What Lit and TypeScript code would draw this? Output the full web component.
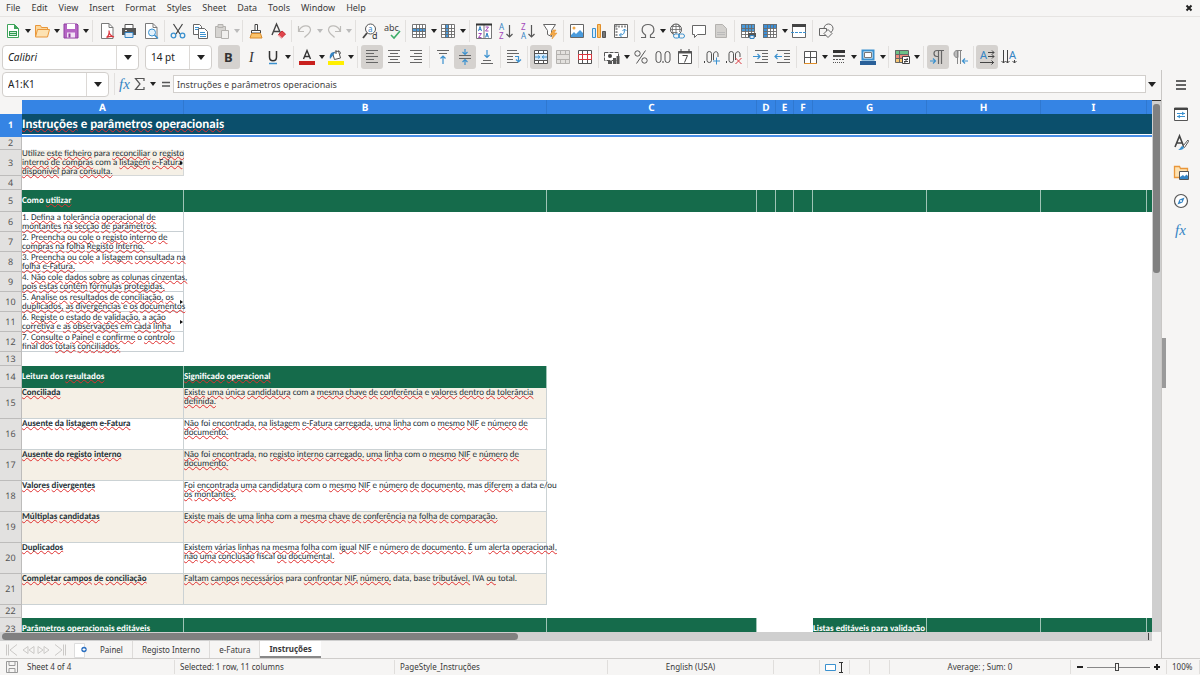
import { LitElement, html, svg, css, nothing, TemplateResult } from "lit";
import { customElement, property } from "lit/decorators.js";
import { classMap } from "lit/directives/class-map.js";

const page = svg`<path d="M2.500 .5h7.500l4 4v11h-11.500z" fill="#fff" stroke="#7a7a7a"/><path d="M10 .5v4h4" fill="none" stroke="#7a7a7a"/>`;
const lines = (d: string, color = "#666") => svg`<path d=${d} fill="none" stroke=${color}/>`;
const gridLines = svg`<path d="M1.500 1.500h13v13h-13zM1.500 5.500h13M1.500 8.500h13M1.500 11.500h13M5.500 1.500v13M8.500 1.500v13M11.500 1.500v13" fill="none" stroke="#6a6a6a" stroke-width=".9"/>`;
const letter = (x: number, y: number, size: number, fill: string, s: string) =>
  svg`<text x=${x} y=${y} font-size=${size} fill=${fill} font-family="Noto Sans">${s}</text>`;

const ICONS: Record<string, TemplateResult> = {
  new: svg`<path d="M2.500 1.500h7l4 4v9h-11z" fill="#fff" stroke="#3fa45b"/><path d="M9 1v5h5z" fill="#3fa45b"/><path d="M4 8h8v5h-8z" fill="#2f9a50"/><path d="M5 9.500h6M5 11.500h6" stroke="#cfeed8"/>`,
  open: svg`<path d="M1.500 13.500v-11h5l1 2h6v3" fill="#fcd79b" stroke="#e9973a"/><path d="M3.500 6.500h12l-2 7.500h-12z" fill="#fde2b3" stroke="#e9973a"/>`,
  save: svg`<path d="M1 1h13l1 1v13h-14z" fill="#b565c4" stroke="#8f3fa0"/><path d="M4 1h8v5h-8z" fill="#fff"/><path d="M4 9.500h8v5h-8z" fill="#f3e3f6"/><path d="M5.500 10.500h2v4h-2z" fill="#8f3fa0"/>`,
  pdf: svg`${page}<path d="M7.500 14.500c2.500-2 3-4 2.500-7c0 3 2 5.500 5 6.500c-2-1-5-.5-7.500 .5" fill="none" stroke="#d9363e" stroke-width="1.200"/>`,
  print: svg`<path d="M4 1.500h8v4h-8z" fill="#fff" stroke="#555"/><path d="M1 5h14v7h-14z" fill="#555"/><path d="M4 9.500h8v5h-8z" fill="#dceaf7" stroke="#3584c4"/><path d="M4 7.500h2" stroke="#eee"/>`,
  preview: svg`${page}<circle cx="9" cy="9.500" r="3.500" fill="#e3f1fb" stroke="#3b91cf"/><path d="M11.500 12l3.500 3.500" stroke="#3b91cf" stroke-width="1.500"/>`,
  cut: svg`<path d="M3.500 1l6.500 10M12.500 1l-6.500 10" stroke="#444" fill="none" stroke-width="1.200"/><circle cx="3.500" cy="12.500" r="2.300" fill="none" stroke="#3b91cf" stroke-width="1.300"/><circle cx="12.500" cy="12.500" r="2.300" fill="none" stroke="#3b91cf" stroke-width="1.300"/>`,
  copy: svg`<path d="M1.500 1.500h6l2 2v8h-8z" fill="#fff" stroke="#666"/><path d="M3 4.500h4M3 6.500h4" stroke="#3b91cf"/><path d="M6.500 5.500h6l3 3v7h-9z" fill="#fff" stroke="#666"/><path d="M8 9.500h5M8 11.500h6M8 13.500h6" stroke="#3b91cf"/>`,
  paste: svg`<path d="M1.500 3.500h10v11h-10z" fill="#d6d4d1" stroke="#b4b2af"/><path d="M4 1.500h5v3h-5z" fill="#d6d4d1" stroke="#b4b2af"/><path d="M7.500 7.500h7v8h-7z" fill="#f1f0ee" stroke="#b4b2af"/>`,
  brush: svg`<path d="M7 1.500h2.500v6h-2.500z" fill="#fff" stroke="#444"/><path d="M3.500 7.500h9v2.500h-9z" fill="#fff" stroke="#444"/><path d="M3.500 10.500h9l1.500 4.500h-12z" fill="#fbc36b" stroke="#d98a2b"/>`,
  clear: svg`<path d="M2 12l4.500-11l4 9M3.500 8.500h6" fill="none" stroke="#444" stroke-width="1.400"/><path d="M8 12l4-4l3.500 3l-4 4z" fill="#e0454c" stroke="#c62b33"/><path d="M8 12l3.500 3" stroke="#f5b3b6" stroke-width="1.500"/>`,
  undo: svg`<path d="M1.500 3v5.500h5.500M2 8c2-6 10.500-7 11.500-1.500c.3 3-3 5-6 8" fill="none" stroke="#bebcb9" stroke-width="1.200"/>`,
  redo: svg`<path d="M14.500 3v5.500h-5.500M14 8c-2-6-10.500-7-11.500-1.500c-.3 3 3 5 6 8" fill="none" stroke="#bebcb9" stroke-width="1.200"/>`,
  find: svg`<circle cx="8.500" cy="6" r="5" fill="#fff" stroke="#555"/><path d="M5 10l-4 5" stroke="#444" stroke-width="1.800"/>${letter(6, 9, 8, "#3584c4", "a")}${letter(10, 16, 9, "#333", "d")}`,
  spell: svg`${letter(0, 8, 9, "#444", "abc")}<path d="M7 12l3 3l6-7" fill="none" stroke="#3fae6a" stroke-width="1.600"/>`,
  row: svg`<path d="M1 1h14v14h-14z" fill="#fff"/><path d="M1 5h14v4h-14z" fill="#4a9bdc"/>${gridLines}`,
  col: svg`<path d="M1 1h14v14h-14z" fill="#fff"/><path d="M5 1h4v14h-4z" fill="#4a9bdc"/>${gridLines}`,
  sort: svg`<path d="M.5 1.500h15v14h-15zM8 2v13" fill="#fff" stroke="#777"/><path d="M0 1.500h16" stroke="#333" stroke-width="2"/><path d="M2.500 8l1.500-4.500l1.500 4.500M3 6.500h2M9.500 14.500l1.500-4.500l1.500 4.500M10 13h2" fill="none" stroke="#3584c4"/><path d="M2.500 10.500h3l-3 4h3M9.500 4h3l-3 4h3" fill="none" stroke="#a347ba"/>`,
  asc: svg`${letter(1, 7, 8, "#3584c4", "A")}${letter(1, 16, 8, "#a347ba", "Z")}<path d="M11.500 2v12M8.500 11l3 3l3-3" fill="none" stroke="#555" stroke-width="1.200"/>`,
  desc: svg`${letter(1, 7, 8, "#a347ba", "Z")}${letter(1, 16, 8, "#3584c4", "A")}<path d="M11.500 2v12M8.500 11l3 3l3-3" fill="none" stroke="#555" stroke-width="1.200"/>`,
  filter: svg`<path d="M1.500 1.500h12l-4 6v6l-4-2v-4z" fill="#fff" stroke="#666"/><path d="M11 7l-3 5h3l-1 4l5-6h-3l2-3z" fill="#f3a949" stroke="#e08e2a" stroke-width=".5"/>`,
  image: svg`<path d="M1.500 1.500h13v13h-13z" fill="#fff" stroke="#666"/><circle cx="5" cy="5" r="1.500" fill="#f3a949"/><path d="M2 14v-2l3-3l2 2l4-4l3 3v4z" fill="#4a9bdc"/>`,
  chart: svg`<path d="M1.500 5.500h3v9h-3z" fill="#d9ecfa" stroke="#3b91cf"/><path d="M6.500 1.500h3v13h-3z" fill="#fbc36b" stroke="#e08e2a"/><path d="M11.500 8.500h3v6h-3z" fill="#777" stroke="#555"/>`,
  pivot: svg`<path d="M1.500 1.500h13v13h-13z" fill="#fff" stroke="#666"/><path d="M2 3.500h12M3.500 2v12" stroke="#999" stroke-width="2" stroke-dasharray="2 1"/><path d="M6.500 12c4 0 5-1 5-6M8.500 10l-2 2l2 2M9.500 8l2-2l2 2" fill="none" stroke="#3b91cf"/>`,
  omega: svg`<path d="M1 14.500h4.500v-2.500c-5-3-4.500-10.500 2.500-10.500s7.500 7.500 2.500 10.500v2.500h4.500" fill="none" stroke="#666" stroke-width="1.200"/>`,
  link: svg`<circle cx="7" cy="6.500" r="5.500" fill="#fff" stroke="#555"/><path d="M1.500 6.500h11M7 1v11M2.500 3.500h9M2.500 9.500h6M4.500 2c-1.500 3-1.500 6 0 9M9.500 2c1.500 3 1.500 5 1 7" fill="none" stroke="#666" stroke-width=".8"/><rect x="4.500" y="11" width="6" height="4" rx="2" fill="#f6f5f4" stroke="#3b91cf"/><rect x="9.500" y="11" width="6" height="4" rx="2" fill="none" stroke="#3b91cf"/>`,
  comment: svg`<path d="M1.500 2.500h13v9h-8l-3 3v-3h-2z" fill="#fff" stroke="#666"/>`,
  header: svg`<path d="M2.500 1.500h7l4 4v9h-11z" fill="#d3d1ce" stroke="#b4b2af"/><path d="M4 9.500h8M4 11.500h8" stroke="#bbb"/>`,
  printarea: svg`<path d="M1 1h14v14h-14z" fill="#fff"/><path d="M1 1h14v7h-14z" fill="#4a9bdc"/>${gridLines}<path d="M8 10h8v4h-8z" fill="#555"/><path d="M10 12.500h4v3h-4z" fill="#dceaf7" stroke="#3584c4"/>`,
  freeze: svg`<path d="M1 1h14v14h-14z" fill="#fff"/><path d="M1 1h14v4h-14zM1 1h4v14h-4z" fill="#3b8fd8"/>${gridLines}`,
  split: svg`<path d="M1.500 3.500h13v11h-13z" fill="#fff" stroke="#666"/><path d="M1 2.500h14" stroke="#444" stroke-width="3"/><path d="M0 9.500h16" stroke="#3b91cf" stroke-dasharray="3 1"/>`,
  shapes: svg`<circle cx="10.500" cy="5.500" r="4.500" fill="#f6f5f4" stroke="#666"/><path d="M1.500 5.500h7v7h-7z" fill="#f6f5f4" stroke="#666"/><path d="M10 6.500l4 4l-4 4l-4-4z" fill="#f6f5f4" stroke="#666"/>`,
  bold: svg`<text x="3" y="13" font-size="13" font-weight="700" fill="#333" font-family="Noto Sans">B</text>`,
  italic: svg`<text x="6" y="13" font-size="14" font-style="italic" fill="#333" font-family="Liberation Serif">I</text>`,
  underline: svg`<path d="M4.500 2v6c0 5 7 5 7 0v-6" fill="none" stroke="#333" stroke-width="1.500"/><path d="M4 14.500h8" stroke="#3b91cf" stroke-width="1.500"/>`,
  fontcolor: svg`<path d="M4.500 10l3.500-8.500l3.500 8.500M5.500 7.500h5" fill="none" stroke="#333" stroke-width="1.400"/><path d="M0 12h16v4h-16z" fill="#c9211e"/>`,
  highlight: svg`<path d="M4.500 4l6-2l2 7l-6 1.500z" fill="#fff" stroke="#555"/><path d="M2 10c-1-4 1-8 5-6.500l-2 3z" fill="#3584c4"/><path d="M8 1v4M10 2c3 0 3 3 1 4" fill="none" stroke="#555"/><path d="M0 12h16v4h-16z" fill="#ffef00"/>`,
  left: lines("M2 1.500h12M2 4.500h8M2 7.500h12M2 10.500h8M2 13.500h12"),
  center: lines("M2 1.500h12M4 4.500h8M2 7.500h12M4 10.500h8M2 13.500h12"),
  right: lines("M2 1.500h12M6 4.500h8M2 7.500h12M6 10.500h8M2 13.500h12"),
  top: svg`${lines("M2 1.500h12M4 4.500h8")}<path d="M8 15v-8M5.500 9.500l2.500-2.500l2.500 2.500" fill="none" stroke="#3b91cf" stroke-width="1.200"/>`,
  middle: svg`${lines("M2 6.500h12M2 9.500h12")}<path d="M8 0v5M5.500 3l2.500 2.500l2.500-2.500M8 16v-5M5.500 13l2.500-2.500l2.500 2.500" fill="none" stroke="#3b91cf" stroke-width="1.200"/>`,
  bottom: svg`${lines("M2 14.500h12M4 11.500h8")}<path d="M8 1v7M5.500 6l2.500 2.500l2.500-2.500" fill="none" stroke="#3b91cf" stroke-width="1.200"/>`,
  wrap: svg`${lines("M1 1.500h10M1 4.500h12M1 7.500h6M1 10.500h6M1 13.500h11")}<path d="M9 7.500h3.500v5M10 10.500l2.500 2.500l2.500-2.500" fill="none" stroke="#3b91cf" stroke-width="1.200"/>`,
  merge: svg`<path d="M1.500 1.500h13v13h-13zM1.500 4.500h13M1.500 11.500h13M5.500 1.500v3M10.500 1.500v3M5.500 11.500v3M10.500 11.500v3" fill="#fff" stroke="#555"/><path d="M2 5h12v6h-12z" fill="#d6eafa"/><path d="M2 8h4M10 8h4M5 6.500l2 1.500l-2 1.500M11 6.500l-2 1.500l2 1.500" fill="none" stroke="#3b91cf"/>`,
  mergeoff: svg`<path d="M1.500 1.500h13v13h-13zM1.500 5.500h13M1.500 10.500h13M5.500 1.500v4M10.500 1.500v4M5.500 10.500v4M10.500 10.500v4" fill="#e3e1de" stroke="#b4b2af"/>`,
  unmerge: svg`<path d="M1.500 1.500h13v13h-13zM5.500 1.500v13M10.500 1.500v13" fill="#fff" stroke="#555"/><path d="M1.500 5.500h13v5h-13zM5.500 5.500v5M10.500 5.500v5" fill="#fff" stroke="#d9363e"/>`,
  currency: svg`<path d="M.5 3.500h14v8h-14z" fill="#fff" stroke="#555" stroke-dasharray="4 1"/><circle cx="6" cy="7" r="2" fill="#444"/><path d="M9 9h3v6h-3zM12.500 7h3v8h-3zM4 12h4v3h-4z" fill="#555"/>`,
  percent: svg`<circle cx="4.500" cy="4.500" r="2.700" fill="none" stroke="#555"/><circle cx="11.500" cy="11.500" r="2.700" fill="none" stroke="#555"/><path d="M12.500 1.500l-9 13" stroke="#555"/>`,
  number: svg`<rect x="1" y="2.500" width="5" height="11" rx="2.500" fill="none" stroke="#555"/><rect x="10" y="2.500" width="5" height="11" rx="2.500" fill="none" stroke="#555"/><path d="M8 12v2" stroke="#444"/>`,
  date: svg`<path d="M1.500 2.500h13v12h-13z" fill="#fff" stroke="#555"/><path d="M1 3.500h14" stroke="#555" stroke-width="2"/><path d="M4 0v3M12 0v3" stroke="#444"/><path d="M5.500 6.500h5l-3 7" fill="none" stroke="#444"/>`,
  addDec: svg`<path d="M.5 12v2" stroke="#444"/><rect x="3" y="2.500" width="4.500" height="11" rx="2.200" fill="none" stroke="#555"/><path d="M14 8v-3c0-3-4-3-4.500 0v6" fill="none" stroke="#555"/><path d="M12.500 8.500v7M9 12h7" stroke="#3b91cf"/>`,
  delDec: svg`<path d="M.5 12v2" stroke="#444"/><rect x="3" y="2.500" width="4.500" height="11" rx="2.200" fill="none" stroke="#555"/><path d="M14 8v-3c0-3-4-3-4.500 0v6" fill="none" stroke="#555"/><path d="M9.500 9l6 6M15.500 9l-6 6" stroke="#d9363e"/>`,
  indent: svg`${lines("M2 1.500h13M9 4.500h6M9 7.500h6M9 10.500h6M2 13.500h13")}<path d="M0 7.500h7M4.500 5l2.500 2.500l-2.500 2.500" fill="none" stroke="#3b91cf" stroke-width="1.200"/>`,
  outdent: svg`${lines("M2 1.500h13M9 4.500h6M9 7.500h6M9 10.500h6M2 13.500h13")}<path d="M7 7.500h-7M2.500 5l-2.500 2.500l2.500 2.500" fill="none" stroke="#3b91cf" stroke-width="1.200"/>`,
  borders: svg`<path d="M2.500 2.500h12v12h-12zM8.500 2.500v12M2.500 8.500h12" fill="#fff" stroke="#555"/><path d="M2 14.500h13" stroke="#e08e2a"/>`,
  linestyle: svg`<path d="M2 2.500h12" stroke="#333" stroke-width="3"/><path d="M2 7h12" stroke="#555" stroke-width="2"/><path d="M2 10.500h12" stroke="#555" stroke-dasharray="2 1"/><path d="M2 13.500h12" stroke="#555" stroke-dasharray="1 1"/>`,
  bordercolor: svg`<path d="M2.500 1.500h11v9h-11z" fill="#fff" stroke="#3b91cf" stroke-width="2"/><path d="M4.500 3.500h7v5h-7z" fill="none" stroke="#777"/><path d="M0 12h16v4h-16z" fill="#2a6099"/>`,
  cond: svg`<path d="M1 1h13v4h-13z" fill="#6cc287"/><path d="M1 5h13v4h-13z" fill="#ee8a7e"/><path d="M1 9h8v5h-8z" fill="#f6c774"/><path d="M1.500 1.500h13v12h-13zM1.500 5.500h13M1.500 9.500h13M5.500 1.500v12" fill="none" stroke="#666"/><path d="M8.500 7.500h7v7h-7z" fill="#fff" stroke="#444"/><path d="M10 10.500h4M10 12.500h4M13.500 9l-3 5" stroke="#444"/>`,
  ltr: svg`<path d="M14 1.500h-7c-4 0-4 6 0 6h1M8.500 2v13M11.500 2v13" fill="none" stroke="#666" stroke-width="1.200"/><path d="M0 12h5M3 9.500l2.500 2.500l-2.500 2.500" fill="none" stroke="#3b91cf" stroke-width="1.200"/>`,
  rtl: svg`<path d="M10 1.500h-5c-4 0-4 7 0 7h1v-7M5.500 2v13M8.500 2v13" fill="#bbb" stroke="#888"/><path d="M16 12h-5M13 9.500l-2.500 2.500l2.500 2.500" fill="none" stroke="#3b91cf" stroke-width="1.200"/>`,
  textlr: svg`${letter(1, 10, 11, "#3584c4", "A")}<path d="M9 3.500h6M13 1.500l2 2l-2 2M9 7.500h6M13 5.500l2 2l-2 2M1 13.500h14M12.500 11.500l2 2l-2 2" fill="none" stroke="#444"/>`,
  texttb: svg`${letter(8, 10, 11, "#3584c4", "A")}<path d="M2.500 1v13M.5 12l2 2l2-2M6.500 1v13M4.500 12l2 2l2-2M13.500 11v3M11.500 12l2 2l2-2" fill="none" stroke="#444"/>`,
  fx: svg`<text x="2" y="13" font-size="15" font-style="italic" fill="#3584c4" font-family="Liberation Serif">fx</text>`,
  sigma: svg`<path d="M12 5v-2.500h-8.500l4.500 5.500l-4.500 5.500h8.500v-2.500" fill="none" stroke="#555" stroke-width="1.200"/>`,
  equal: svg`<path d="M4 6.500h8M4 10h8" stroke="#555" stroke-width="1.600"/>`,
  menu: svg`<path d="M3 4h10M3 8h10M3 12h10" stroke="#333" stroke-width="1.600"/>`,
  props: svg`<path d="M1.500 2h13v12.500h-13z" fill="#fff" stroke="#555"/><path d="M1 3h14" stroke="#444" stroke-width="2"/><path d="M4 7.500h8M4 10.500h8" stroke="#3b91cf"/><path d="M9 6l2 1.500l-2 1.500M7 9l-2 1.500l2 1.500" fill="none" stroke="#3b91cf"/>`,
  styles: svg`<path d="M2 12l4.500-11l4 10M3.500 8h6" fill="none" stroke="#444" stroke-width="1.600"/><path d="M15 5l-5 6l1.500 1.500l4-6z" fill="#fff" stroke="#555"/><path d="M5 14.500c2 1 6 0 6-2l-1.500-1.500c-2 0-1.500 3-4.500 3.500z" fill="#3b91cf"/>`,
  gallery: svg`<path d="M1.500 13.500v-11h5l1 2h7v9z" fill="#fde2b3" stroke="#e9973a" stroke-width="1.300"/><path d="M6.500 7.500h9v8h-9z" fill="#fff" stroke="#555"/><path d="M7 15v-2l3-2l1.500 1.500l2-2l1.500 1.500v3z" fill="#3584c4"/>`,
  nav: svg`<circle cx="8" cy="8" r="6.500" fill="#fff" stroke="#555" stroke-width="1.200"/><path d="M11.500 4.500l-2 5l-5 2l2-5z" fill="#3584c4"/><circle cx="8" cy="8" r="1" fill="#fff"/>`,
  first: svg`<path d="M2.500 2.500v11M4.500 2.500v11M13 2.500l-7 5.500l7 5.500" fill="none" stroke="#cbc9c7"/>`,
  prev: svg`<path d="M14 4.500l-5 3.500l5 3.500zM8 4.500l-5 3.500l5 3.500z" fill="none" stroke="#cbc9c7"/>`,
  next: svg`<path d="M2 4.500l5 3.500l-5 3.500zM8 4.500l5 3.500l-5 3.500z" fill="none" stroke="#cbc9c7"/>`,
  last: svg`<path d="M13.500 2.500v11M11.500 2.500v11M3 2.500l7 5.500l-7 5.500" fill="none" stroke="#cbc9c7"/>`,
  addsheet: svg`<path d="M-.5 1.500h10v14h-10z" fill="#fff" stroke="#ddd"/><circle cx="9" cy="7.500" r="2.700" fill="#2a6fc0"/><path d="M7.500 7.500h3M9 6v3" stroke="#fff"/>`,
  disk: svg`<path d="M2.500 2.500h11v11h-11zM5 2.500v4h6v-4M5 13.500v-4h6v4" fill="none" stroke="#999"/>`,
  close: svg`<path d="M5.500 5.500l5 5M10.500 5.500l-5 5" stroke="#222" stroke-width="2"/>`,
};

const icon = (name: string) =>
  html`<svg viewBox="0 0 16 16" width="16" height="16" aria-hidden="true">${ICONS[name]}</svg>`;

const shared = css`
  * { box-sizing: border-box; }
  button {
    font: inherit;
    color: inherit;
    background: none;
    border: 0;
    padding: 0;
    margin: 0;
    display: flex;
    align-items: center;
    justify-content: center;
    flex: none;
  }
  svg { display: block; flex: none; overflow: visible; }
  .drop::before {
    content: "";
    border: 3px solid transparent;
    border-top: 4px solid #222;
    border-bottom: 0;
  }
  .drop.dim::before { border-top-color: #bbb; }
`;

/* Toolbar tokens: "name" icon, "name*" pressed, "name+" with drop arrow, "name-" with dimmed arrow, "|" and "||" separators. */
const STANDARD = "new+ open+ save+ || pdf print preview | cut copy paste- | brush clear | undo- redo- || find spell | row+ col+ || sort asc desc filter | image chart pivot | omega+ link comment header | printarea freeze+ split | shapes";
const FORMATTING = "bold* italic underline+ | fontcolor+ highlight+ || left* center right | top middle* bottom | wrap | merge* mergeoff unmerge | currency+ percent number date | addDec delDec | indent outdent | borders+ linestyle+ bordercolor+ | cond+ || ltr* rtl | textlr* texttb";

@customElement("tool-strip")
class ToolStrip extends LitElement {
  @property() items = "";
  static styles = [
    shared,
    css`
      :host { display: flex; align-items: center; }
      .tool { width: 22px; height: 24px; border-radius: 3px; }
      .on { background: #d5d2cf; }
      .drop { width: 7px; height: 24px; }
      .sep { width: 5px; height: 22px; flex: none; display: flex; justify-content: center; }
      .sep::before { content: ""; width: 1px; background: #e2e0de; }
      .wide { width: 7px; }
    `,
  ];
  render() {
    return this.items.split(" ").map((t) => {
      if (t[0] === "|") return html`<span class=${classMap({ sep: true, wide: t === "||" })}></span>`;
      const name = t.replace(/[*+-]/, "");
      const flag = t.slice(name.length);
      return html`<button class=${classMap({ tool: true, on: flag === "*" })} aria-label=${name}>${icon(name)}</button>
        ${flag === "+" || flag === "-"
          ? html`<button class=${classMap({ drop: true, dim: flag === "-" })} aria-label="${name} options"></button>`
          : nothing}`;
    });
  }
}

const COLS: [string, number][] = [
  ["A", 162], ["B", 363], ["C", 210], ["D", 19], ["E", 18], ["F", 19], ["G", 114], ["H", 114], ["I", 106], ["J", 114],
];

type Row = { size: string; kind?: string; cells?: Record<string, string[]>; more?: boolean };
const step = (...t: string[]): Row => ({ size: "step", kind: "text", cells: { A: t } });
const result = (a: string, ...b: string[]): Row => ({ size: "result", kind: "result", cells: { A: [a], B: b } });

const ROWS: Row[] = [
  { size: "title", kind: "title", cells: { A: ["Instruções e parâmetros operacionais"] } },
  { size: "gap-s" },
  { size: "intro", kind: "intro", more: true, cells: { A: ["Utilize este ficheiro para reconciliar o registo", "interno de compras com a listagem e-Fatura", "disponível para consulta."] } },
  { size: "gap" },
  { size: "band", kind: "band", cells: { A: ["Como utilizar"] } },
  step("1. Defina a tolerância operacional de", "montantes na secção de parâmetros."),
  step("2. Preencha ou cole o registo interno de", "compras na folha Registo Interno."),
  step("3. Preencha ou cole a listagem consultada na", "folha e-Fatura."),
  step("4. Não cole dados sobre as colunas cinzentas,", "pois estas contêm fórmulas protegidas."),
  { ...step("5. Analise os resultados de conciliação, os", "duplicados, as divergências e os documentos"), more: true },
  { ...step("6. Registe o estado de validação, a ação", "corretiva e as observações em cada linha"), more: true },
  step("7. Consulte o Painel e confirme o controlo", "final dos totais conciliados."),
  { size: "gap" },
  { size: "band", kind: "band2", cells: { A: ["Leitura dos resultados"], B: ["Significado operacional"] } },
  result("Conciliada", "Existe uma única candidatura com a mesma chave de conferência e valores dentro da tolerância", "definida."),
  result("Ausente da listagem e-Fatura", "Não foi encontrada, na listagem e-Fatura carregada, uma linha com o mesmo NIF e número de", "documento."),
  result("Ausente do registo interno", "Não foi encontrada, no registo interno carregado, uma linha com o mesmo NIF e número de", "documento."),
  result("Valores divergentes", "Foi encontrada uma candidatura com o mesmo NIF e número de documento, mas diferem a data e/ou", "os montantes."),
  result("Múltiplas candidatas", "Existe mais de uma linha com a mesma chave de conferência na folha de comparação."),
  result("Duplicados", "Existem várias linhas na mesma folha com igual NIF e número de documento. É um alerta operacional,", "não uma conclusão fiscal ou documental."),
  result("Completar campos de conciliação", "Faltam campos necessários para confrontar NIF, número, data, base tributável, IVA ou total."),
  { size: "gap-s" },
  { size: "band", kind: "band3", cells: { A: ["Parâmetros operacionais editáveis"], G: ["Listas editáveis para validação"] } },
];

const KNOWN = new Set("a e o com para no um mas data data, base IVA total. final dos fiscal Utilize Como foi e/ou Leitura em".split(" "));
const words = (line: string) =>
  line.split(" ").map((w, i) => html`${i ? " " : ""}${KNOWN.has(w) || /^\d/.test(w) ? w : html`<span class="typo">${w}</span>`}`);

@customElement("sheet-grid")
class SheetGrid extends LitElement {
  static styles = [
    shared,
    css`
      :host { display: block; overflow: hidden; background: #fff; min-width: 0; min-height: 0; }
      table { border-collapse: separate; border-spacing: 0; table-layout: fixed; width: 0; font: 9px/9px Carlito, Lato, sans-serif; color: #263238; text-rendering: geometricPrecision; }
      .num { width: 22px; }
      th { padding: 0; font: 9px/12px "Noto Sans", sans-serif; }
      thead th { height: 14px; background: #3584e4; color: #fff; font-size: 10px; font-weight: 700; border-right: 1px solid #2f78d0; }
      thead th.corner { background: #f6f5f4; border: 0; }
      tbody th { background: #e2e1e0; color: #555; border-right: 1px solid #bdbcbb; border-bottom: 1px solid #bdbcbb; }
      .row-title th { background: #3584e4; color: #fff; font-weight: 700; border-color: #3584e4; }
      td { padding: 0; vertical-align: top; white-space: nowrap; }
      .box { display: flex; align-items: center; width: 100%; }
      .lines { flex: 1; min-width: 0; }
      .line { display: block; }
      .more::after { content: ""; border: 2px solid transparent; border-left: 3px solid #111; border-right: 0; }
      .typo { text-decoration: underline wavy #e03030 1px; text-decoration-skip-ink: none; text-underline-offset: 0; }
      .row-title { height: 23px; }
      .title .box { height: 21px; }
      .gap { height: 14px; }
      .gap-s { height: 13px; }
      .intro .box { height: 25px; }
      .intro { height: 26px; }
      .band { height: 22px; }
      .band .box { height: 21px; }
      .step { height: 20px; }
      .step .box { height: 19px; }
      .result { height: 31px; }
      .result .box { height: 30px; align-items: flex-start; }
      .k-title td { background: #0b4f6c; color: #fff; font: 700 13px/16px Carlito, Lato, sans-serif; border-bottom: 2px solid #4a90e8; box-shadow: inset 0 -1px #fff; }
      .k-intro td.a { background: #f5f0e6; border-right: 1px solid #d5d8d8; border-bottom: 1px solid #d5d8d8; }
      .k-text td.a { border-right: 1px solid #c8cfd3; border-bottom: 1px solid #c8cfd3; }
      .k-result td.a, .k-result td.b { border-right: 1px solid #cbd2d4; border-bottom: 1px solid #cbd2d4; }
      .k-result:nth-child(odd) td.a, .k-result:nth-child(odd) td.b { background: #f5f0e6; }
      .k-result td.a { font-weight: 700; }
      .green { background: #156b4b; color: #fff; font-weight: 700; border-right: 1px solid #9fc4b6; }
    `,
  ];
  private isGreen(kind: string | undefined, col: string) {
    if (kind === "band") return true;
    if (kind === "band2") return "AB".includes(col);
    return kind === "band3" && !"DEF".includes(col);
  }
  render() {
    return html`<table aria-label="Instruções">
      <colgroup><col class="num" />${COLS.map(([, w]) => html`<col style="width:${w}px" />`)}</colgroup>
      <thead><tr><th class="corner"></th>${COLS.map(([c]) => html`<th scope="col">${c === "J" ? "" : c}</th>`)}</tr></thead>
      <tbody>
        ${ROWS.map((r, i) => html`<tr class="${r.size} row-${r.kind ?? "empty"} k-${r.kind ?? "empty"}">
          <th scope="row">${i + 1}</th>
          ${r.kind === "title"
            ? html`<td colspan="10"><div class="box"><span>${words(r.cells!.A[0])}</span></div></td>`
            : COLS.map(([c]) => html`<td class=${classMap({ [c.toLowerCase()]: true, green: this.isGreen(r.kind, c) })}>
                ${r.cells?.[c]
                  ? html`<div class=${classMap({ box: true, more: !!r.more })}><div class="lines">${r.cells[c].map((l) => html`<span class="line">${words(l)}</span>`)}</div></div>`
                  : nothing}
              </td>`)}
        </tr>`)}
      </tbody>
    </table>`;
  }
}

@customElement("app-root")
class AppRoot extends LitElement {
  static styles = [
    shared,
    css`
      :host { display: flex; flex-direction: column; height: 100vh; overflow: hidden; background: #f6f5f4; color: #3a3a3a; font: 10px/14px "Noto Sans", sans-serif; }
      nav { display: flex; align-items: center; gap: 11px; height: 17px; padding: 0 3px 0 6px; border-bottom: 1px solid #e6e4e2; flex: none; font-size: 9px; }
      nav .close { margin-left: auto; }
      .bar { display: flex; align-items: center; flex: none; padding-left: 2px; height: 27px; }
      .format { height: 26px; gap: 6px; }
      .combo { display: flex; height: 25px; border: 1px solid #d2cfcc; border-radius: 4px; background: #fff; overflow: hidden; flex: none; }
      .combo input { border: 0; outline: 0; padding: 0 0 0 5px; margin: 0; flex: 1; min-width: 0; background: none; font: inherit; color: #222; }
      .combo .drop { width: 22px; border-left: 1px solid #dcd9d6; }
      .combo .drop::before, .formula > .expand::before { border-width: 5px 4px 0; }
      .font { width: 137px; }
      .font input { font-style: italic; }
      .size { width: 67px; }
      .name { width: 107px; }
      .work { display: flex; flex: 1; min-height: 0; }
      .main { display: flex; flex-direction: column; flex: 1; min-width: 0; }
      .formula { display: flex; align-items: center; height: 30px; padding: 0 5px 2px 2px; flex: none; }
      .rule { width: 1px; height: 22px; background: #e2e0de; margin: 0 2px 0 5px; }
      .formula .mini { width: 15px; }
      .formula .mini-drop { width: 11px; }
      .entry { flex: 1; min-width: 0; height: 18px; margin: 0 2px 0 0; padding: 0 3px; border: 1px solid #d2cfcc; background: #fff; font: inherit; font-size: 9px; color: #444; outline: 0; }
      .view { display: flex; flex: 1; min-height: 0; }
      sheet-grid { flex: 1; }
      .vscroll { width: 9px; background: #cfcfcf; padding: 3px 1px 0; border-top: 1px solid #333; flex: none; }
      .vthumb { height: 32%; border-radius: 3px; background: #808080; }
      .hscroll { height: 9px; background: #cfcfcf; padding: 1px 3px 1px 2px; margin-right: 9px; display: flex; justify-content: space-between; flex: none; }
      .hthumb { width: 45%; border-radius: 4px; background: #808080; }
      .grip { width: 1px; background: #444; }
      .tabs { display: flex; align-items: center; height: 17px; padding-left: 4px; flex: none; font-size: 8px; }
      .tabs .nav { width: 16px; }
      .tabs .add { width: 16px; margin-left: 7px; }
      .tab { height: 17px; padding: 0 9px; border-right: 1px solid #dddbd9; }
      .active { background: #fff; font-weight: 700; border-bottom: 2px solid #888; border-right: 0; }
      aside { width: 39px; border-left: 1px solid #c9c7c5; display: flex; align-items: center; flex: none; }
      .handle { width: 4px; height: 50px; background: #9a9a9a; margin-top: -2px; flex: none; }
      .deck { display: flex; flex-direction: column; align-self: stretch; gap: 5px; flex: 1; align-items: center; padding: 3px 4px 0 0; }
      .deck button { width: 28px; height: 24px; }
      .status { display: grid; grid-template-columns: 22fr 153fr 220fr 213fr 166fr 46fr 30fr 20fr 20fr 181fr 96fr 33fr; height: 17px; border-top: 1px solid #cfcdcb; align-items: center; flex: none; font-size: 8px; }
      .status > * { border-right: 1px solid #e0dedc; padding: 0 5px; height: 14px; line-height: 14px; white-space: nowrap; min-width: 0; display: flex; align-items: center; }
      .status > .mid { justify-content: center; }
      .status > .icon { border: 0; padding: 0 0 0 4px; }
      .zoom input { appearance: none; flex: 1; min-width: 0; margin: 0 3px; height: 12px; background: linear-gradient(#888, #888) center / 100% 1px no-repeat; }
      .zoom input::-webkit-slider-thumb { appearance: none; width: 4px; height: 8px; border: 1px solid #444; background: #f6f5f4; }
      .zoom svg { width: 8px; height: 8px; }
    `,
  ];
  render() {
    return html`
      <nav aria-label="Menu">
        ${"File Edit View Insert Format Styles Sheet Data Tools Window Help".split(" ").map((m) => html`<button class="item">${m}</button>`)}
        <button class="close" aria-label="Close">${icon("close")}</button>
      </nav>
      <div class="bar"><tool-strip items=${STANDARD}></tool-strip></div>
      <div class="bar format">
        <div class="combo font"><input aria-label="Font name" value="Calibri" /><button class="drop" aria-label="Font list"></button></div>
        <div class="combo size"><input aria-label="Font size" value="14 pt" /><button class="drop" aria-label="Size list"></button></div>
        <tool-strip items=${FORMATTING}></tool-strip>
      </div>
      <div class="work">
        <div class="main">
          <div class="formula">
            <div class="combo name"><input aria-label="Name box" value="A1:K1" /><button class="drop" aria-label="Name list"></button></div>
            <span class="rule"></span>
            <button class="mini" aria-label="Function wizard">${icon("fx")}</button>
            <button class="mini" aria-label="Sum">${icon("sigma")}</button>
            <button class="drop mini-drop" aria-label="Sum options"></button>
            <button class="mini" aria-label="Formula">${icon("equal")}</button>
            <input class="entry" aria-label="Input line" value="Instruções e parâmetros operacionais" />
            <button class="drop expand" aria-label="Expand"></button>
          </div>
          <div class="view">
            <sheet-grid></sheet-grid>
            <div class="vscroll"><div class="vthumb"></div></div>
          </div>
          <div class="hscroll"><div class="hthumb"></div><div class="grip"></div></div>
          <div class="tabs">
            ${["first", "prev", "next", "last"].map((n) => html`<button class="nav" aria-label="${n} sheet">${icon(n)}</button>`)}
            <button class="add" aria-label="Add sheet">${icon("addsheet")}</button>
            ${["Painel", "Registo Interno", "e-Fatura", "Instruções"].map((t) => html`<button class=${classMap({ tab: true, active: t === "Instruções" })}>${t}</button>`)}
          </div>
        </div>
        <aside>
          <div class="handle"></div>
          <div class="deck">
            ${["menu", "props", "styles", "gallery", "nav", "fx"].map((n) => html`<button aria-label=${n}>${icon(n)}</button>`)}
          </div>
        </aside>
      </div>
      <div class="status">
        <span class="icon">${icon("disk")}</span>
        <span>Sheet 4 of 4</span>
        <span>Selected: 1 row, 11 columns</span>
        <span>PageStyle_Instruções</span>
        <span class="mid">English (USA)</span>
        <span></span>
        <span class="mid"><svg width="22" height="14" viewBox="0 0 22 14"><path d="M1.500 4.500h10v6h-10z" fill="#fff" stroke="#3b91cf"/><path d="M15 2.500h4M15 12.500h4M17.500 2.500v10" stroke="#333" fill="none"/></svg></span>
        <span></span>
        <span></span>
        <span class="mid">Average: ; Sum: 0</span>
        <label class="zoom"><svg viewBox="0 0 8 8"><path d="M1 4h6" stroke="#222" stroke-width="2"/></svg><input type="range" aria-label="Zoom" min="0" max="100" value="47" /><svg viewBox="0 0 8 8"><path d="M1 4h6M4 1v6" stroke="#222" stroke-width="2"/></svg></label>
        <span>100%</span>
      </div>
    `;
  }
}
